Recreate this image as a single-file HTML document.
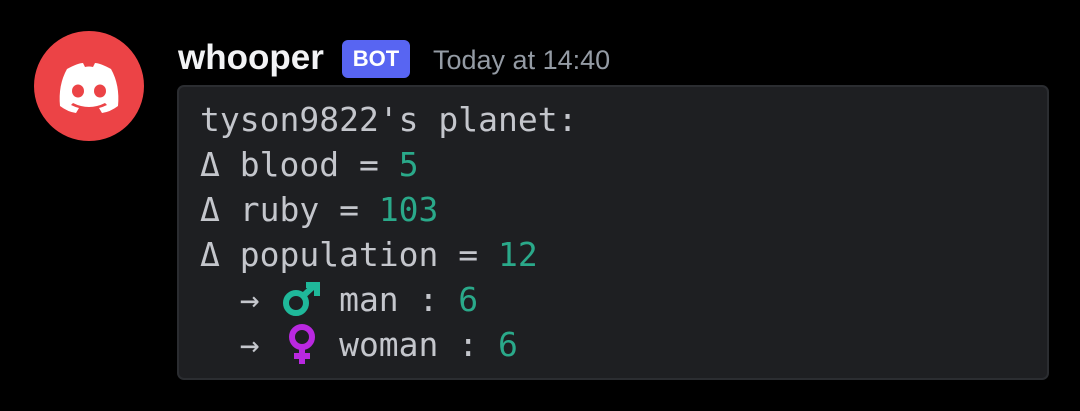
<!DOCTYPE html>
<html><head><style>
body{margin:0;width:1080px;height:411px;background:#000;overflow:hidden;font-family:"Liberation Sans",sans-serif;position:relative}
.av{position:absolute;left:34px;top:31px;width:110px;height:110px;border-radius:50%;background:#ec4346}
.name{position:absolute;left:178px;top:38px;font-size:35px;font-weight:bold;color:#f2f3f5}
.bot{position:absolute;left:342px;top:40px;width:68px;height:38px;border-radius:6px;background:#5865f2;color:#fff;font-size:22px;font-weight:bold;text-align:center;line-height:38px}
.ts{position:absolute;left:433px;top:45px;font-size:27px;color:#949ba4}
.box{position:absolute;left:177px;top:85px;width:868px;height:291px;background:#1e1f22;border:2px solid #2b2d31;border-radius:7px}
pre{position:absolute;left:200px;top:97px;margin:0;font-family:"DejaVu Sans Mono","Liberation Mono",monospace;font-size:33px;line-height:45px;color:#c4c6cc}
.g{color:#2aa98a}
</style></head><body>
<div class="av"><svg width="110" height="110" viewBox="0 0 110 110"><path d="M33 38 Q44 32 49 32 L51 36 Q55 35 59 36 L61 32 Q66 32 77 38 Q86 54 84 75 Q76 81 68 82 L65 77 Q69 76 73 74 L71 72 Q55 80 39 72 L37 74 Q41 76 45 77 L42 82 Q34 81 26 75 Q24 54 33 38Z" fill="#fff"/><ellipse cx="44" cy="60" rx="6" ry="6.5" fill="#ec4346"/><ellipse cx="66" cy="60" rx="6" ry="6.5" fill="#ec4346"/></svg></div>
<div class="name">whooper</div>
<div class="bot">BOT</div>
<div class="ts">Today at 14:40</div>
<div class="box"></div>
<pre>tyson9822's planet:
Δ blood = <span class="g">5</span>
Δ ruby = <span class="g">103</span>
Δ population = <span class="g">12</span>
  →    man : <span class="g">6</span>
  →    woman : <span class="g">6</span></pre>
<svg style="position:absolute;left:282px;top:282px" width="40" height="36" viewBox="0 0 40 36"><circle cx="14" cy="21" r="10" fill="none" stroke="#1fb89a" stroke-width="6"/><path d="M21 14 L33 3 M24 3 H35 V14" fill="none" stroke="#1fb89a" stroke-width="6"/></svg>
<svg style="position:absolute;left:284px;top:324px" width="36" height="40" viewBox="0 0 36 40"><circle cx="18" cy="13" r="10" fill="none" stroke="#b928e0" stroke-width="6"/><path d="M18 23 V40 M10 32 H26" stroke="#b928e0" stroke-width="6"/></svg>
</body></html>
